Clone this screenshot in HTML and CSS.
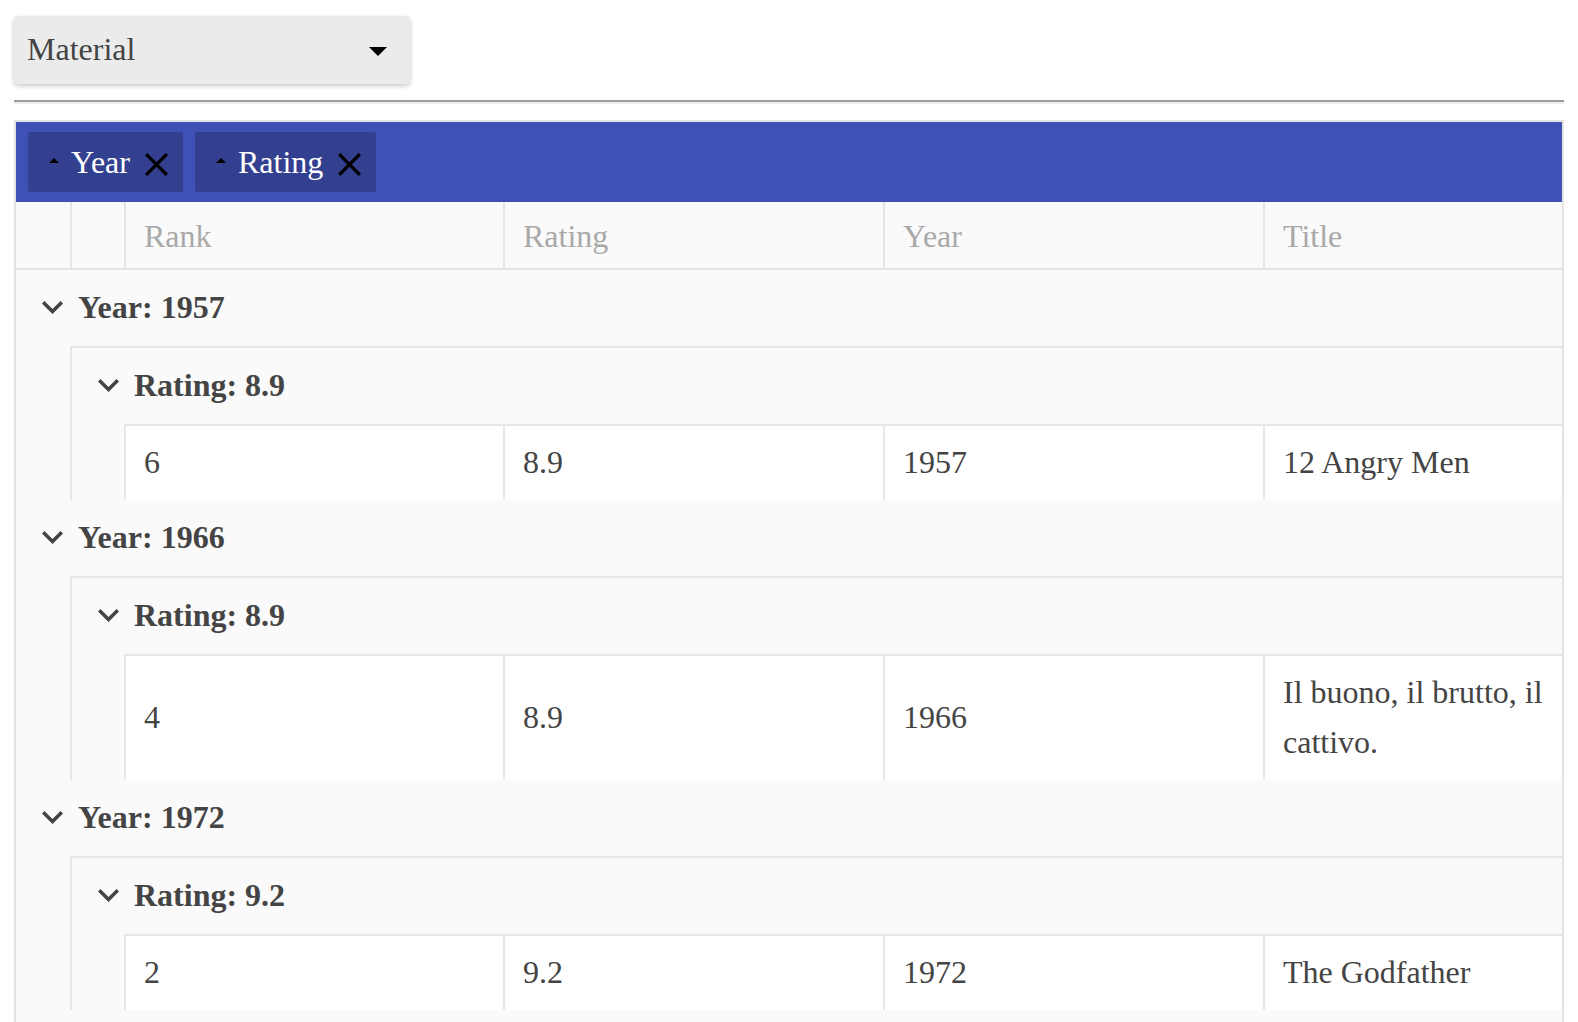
FILE: index.html
```html
<!DOCTYPE html>
<html>
<head>
<meta charset="utf-8">
<link rel="stylesheet" href="styles.css">
</head>
<body>
<div class="page">
  <div class="select">
    <span class="select-text">Material</span>
    <span class="select-arrow"></span>
  </div>
  <div class="rule"></div>
  <div class="grid">
    <div class="groupbar">
      <div class="chip"><span class="tri"></span><span class="chip-text">Year</span><svg class="x" viewBox="5 5 14 14"><path d="M19 6.41L17.59 5 12 10.59 6.41 5 5 6.41 10.59 12 5 17.59 6.41 19 12 13.41 17.59 19 19 17.59 13.41 12z"/></svg></div>
      <div class="chip"><span class="tri"></span><span class="chip-text">Rating</span><svg class="x" viewBox="5 5 14 14"><path d="M19 6.41L17.59 5 12 10.59 6.41 5 5 6.41 10.59 12 5 17.59 6.41 19 12 13.41 17.59 19 19 17.59 13.41 12z"/></svg></div>
    </div>
    <div class="header">
      <div class="hcell c-first"></div>
      <div class="hcell c-second"></div>
      <div class="hcell c-rank">Rank</div>
      <div class="hcell c-rating">Rating</div>
      <div class="hcell c-year">Year</div>
      <div class="hcell c-title">Title</div>
    </div>

    <div class="group">
      <div class="grow"><svg class="chev" viewBox="6 8.59 12 7.41"><path d="M16.59 8.59L12 13.17 7.41 8.59 6 10l6 6 6-6z"/></svg><span>Year: 1957</span></div>
      <div class="nest">
        <div class="grow"><svg class="chev" viewBox="6 8.59 12 7.41"><path d="M16.59 8.59L12 13.17 7.41 8.59 6 10l6 6 6-6z"/></svg><span>Rating: 8.9</span></div>
        <div class="datarow">
          <div class="cell c-rank">6</div>
          <div class="cell c-rating">8.9</div>
          <div class="cell c-year">1957</div>
          <div class="cell c-title">12 Angry Men</div>
        </div>
      </div>
    </div>

    <div class="group">
      <div class="grow"><svg class="chev" viewBox="6 8.59 12 7.41"><path d="M16.59 8.59L12 13.17 7.41 8.59 6 10l6 6 6-6z"/></svg><span>Year: 1966</span></div>
      <div class="nest">
        <div class="grow"><svg class="chev" viewBox="6 8.59 12 7.41"><path d="M16.59 8.59L12 13.17 7.41 8.59 6 10l6 6 6-6z"/></svg><span>Rating: 8.9</span></div>
        <div class="datarow">
          <div class="cell c-rank">4</div>
          <div class="cell c-rating">8.9</div>
          <div class="cell c-year">1966</div>
          <div class="cell c-title">Il buono, il brutto, il cattivo.</div>
        </div>
      </div>
    </div>

    <div class="group">
      <div class="grow"><svg class="chev" viewBox="6 8.59 12 7.41"><path d="M16.59 8.59L12 13.17 7.41 8.59 6 10l6 6 6-6z"/></svg><span>Year: 1972</span></div>
      <div class="nest">
        <div class="grow"><svg class="chev" viewBox="6 8.59 12 7.41"><path d="M16.59 8.59L12 13.17 7.41 8.59 6 10l6 6 6-6z"/></svg><span>Rating: 9.2</span></div>
        <div class="datarow">
          <div class="cell c-rank">2</div>
          <div class="cell c-rating">9.2</div>
          <div class="cell c-year">1972</div>
          <div class="cell c-title">The Godfather</div>
        </div>
      </div>
    </div>
  </div>
</div>
</body>
</html>
```

FILE: styles.css
```css
html, body {
  margin: 0;
  padding: 0;
  background: #ffffff;
  overflow: hidden;
}

body {
  font-family: "Liberation Serif", "Times New Roman", serif;
  font-size: 32px;
  color: #444444;
}

.page {
  padding: 16px 14px 0 14px;
}

.select {
  width: 396px;
  height: 68px;
  box-sizing: border-box;
  background: #ebebeb;
  border-radius: 4px;
  box-shadow: 0 2px 5px rgba(0, 0, 0, 0.22);
  display: flex;
  align-items: center;
  justify-content: space-between;
  padding: 0 23px 2px 13px;
}

.select-text {
  color: #444444;
  line-height: 1;
}

.select-arrow {
  width: 0;
  height: 0;
  border-left: 9px solid transparent;
  border-right: 9px solid transparent;
  border-top: 9px solid #000000;
  margin-top: 4px;
}

.rule {
  margin-top: 16px;
  border-top: 2px solid #9c9c9c;
  border-bottom: 2px solid #eeeeee;
}

.grid {
  margin-top: 16px;
  border: 2px solid #e3e3e3;
  border-bottom: none;
  background: #fafafa;
  padding-bottom: 40px;
}

.groupbar {
  background: #3f51b5;
  height: 80px;
  box-sizing: border-box;
  padding: 10px 12px;
  display: flex;
  gap: 12px;
}

.chip {
  height: 60px;
  background: #333f8f;
  border-radius: 3px;
  display: flex;
  align-items: center;
  padding: 0 15px 0 21px;
  color: #ffffff;
}

.tri {
  width: 0;
  height: 0;
  border-left: 5px solid transparent;
  border-right: 5px solid transparent;
  border-bottom: 5px solid #000000;
  margin-right: 12px;
  margin-top: -3px;
}

.chip-text {
  line-height: 1;
  margin-right: 15px;
}

.x {
  width: 23px;
  height: 23px;
  fill: #000000;
  margin-top: 4px;
}

.header {
  display: flex;
  border-bottom: 2px solid #e3e3e3;
  background: #fafafa;
}

.hcell {
  box-sizing: border-box;
  height: 66px;
  line-height: 63px;
  padding-top: 3px;
  padding-left: 18px;
  color: #a9a9a9;
  border-left: 2px solid #e6e6e6;
}

.c-first {
  width: 54px;
  border-left: none;
  padding-left: 0;
}

.c-second {
  width: 54px;
  padding-left: 0;
}

.c-rank {
  width: 379px;
  flex: none;
}

.c-rating {
  width: 380px;
  flex: none;
}

.c-year {
  width: 380px;
  flex: none;
}

.c-title {
  flex: 1;
  min-width: 0;
}

.group {
  background: #fafafa;
}

.grow {
  height: 76px;
  display: flex;
  align-items: center;
  padding-left: 26px;
  padding-bottom: 2px;
  box-sizing: border-box;
  font-weight: bold;
  color: #444444;
}

.chev {
  width: 21px;
  height: 13px;
  fill: #444444;
  margin-right: 15px;
  flex: none;
}

.nest {
  margin-left: 54px;
  border-left: 2px solid #e6e6e6;
  border-top: 2px solid #e6e6e6;
}

.datarow {
  margin-left: 52px;
  border-top: 2px solid #e6e6e6;
  background: #ffffff;
  display: flex;
}

.cell {
  box-sizing: border-box;
  border-left: 2px solid #e6e6e6;
  padding: 11px 16px 13px 18px;
  line-height: 50px;
  display: flex;
  align-items: center;
  color: #444444;
}
```
